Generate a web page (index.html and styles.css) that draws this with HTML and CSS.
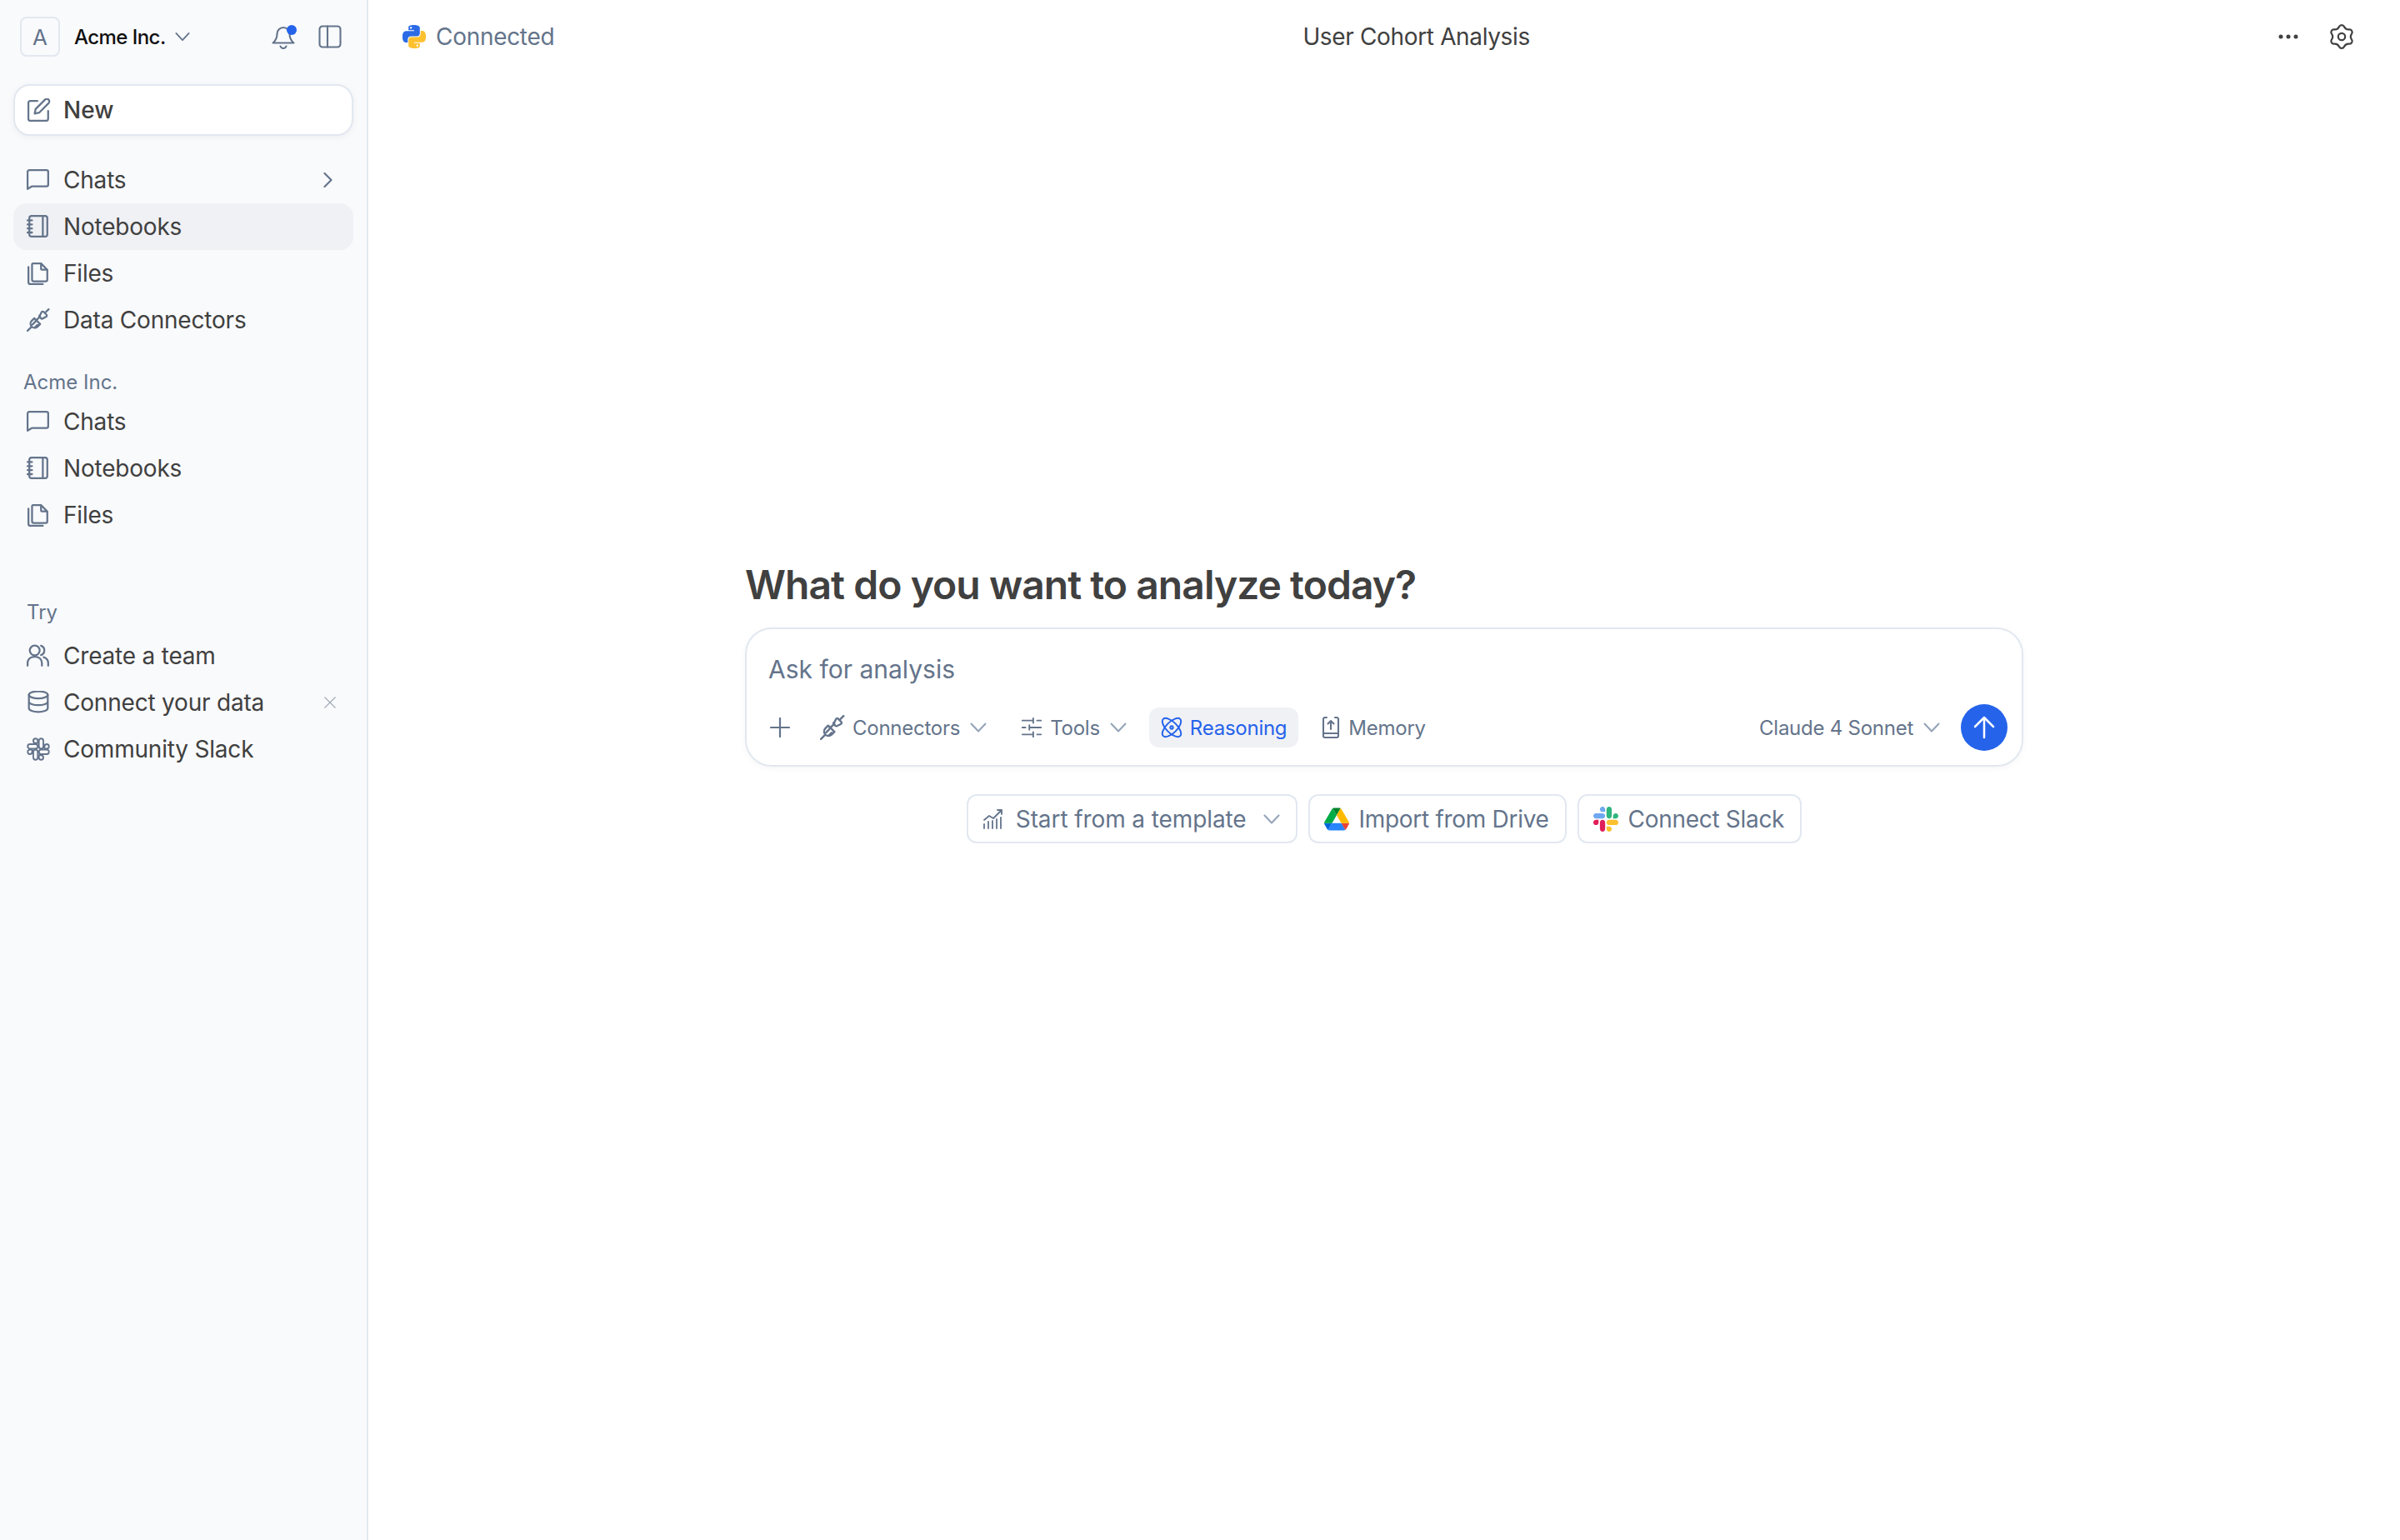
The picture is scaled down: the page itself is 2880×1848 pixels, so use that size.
FILE: index.html
```html
<!DOCTYPE html>
<html lang="en">
<head>
    <meta charset="UTF-8">
    <meta name="viewport" content="width=device-width, initial-scale=1.0">
    <title>User Cohort Analysis</title>
    <link rel="stylesheet" href="styles.css">
</head>
<body>
    <svg class="sprites" aria-hidden="true">
        <symbol id="i-chat" viewBox="2 2 26 26"><path d="M3 25V6a2 2 0 0 1 2-2h19a2 2 0 0 1 2 2v14a2 2 0 0 1-2 2H8z"/></symbol>
        <symbol id="i-notebook" viewBox="2 2 26 26"><rect x="5" y="3" width="20" height="23" rx="2.500"/><path d="M20 3v23M3 8h5M3 12.500h5M3 17h5M3 21.500h5"/></symbol>
        <symbol id="i-files" viewBox="2 2 26 26"><path d="M9 4h9l7 7v11a2 2 0 0 1-2 2H10a2 2 0 0 1-2-2V5a1 1 0 0 1 1-1zM18 4v6a1 1 0 0 0 1 1h6M4 8v17a2 2 0 0 0 2 2h14"/></symbol>
        <symbol id="i-plug" viewBox="2 2 26 26"><path d="M3 27l4-4M10.500 13l6.500 6.500-3 3a4.600 4.600 0 0 1-6.500-6.500zM8.500 20l3-3M11 23.500l3-3M26.500 3l-3 3M16.500 10.500l2-4a1.500 1.500 0 0 1 2.500-.5l3 3a1.500 1.500 0 0 1-.5 2.500l-4 2a1.500 1.500 0 0 1-1.500-.3l-1.500-1.500a1.500 1.500 0 0 1-.4-1.700zM12 16l5-5"/></symbol>
        <symbol id="i-users" viewBox="2 2 26 26"><circle cx="11" cy="9" r="5.500"/><path d="M3 26v-3a7 7 0 0 1 7-7h2a7 7 0 0 1 7 7v3M18 3.800a5.500 5.500 0 0 1 0 10.400M21 16.500a7 7 0 0 1 5 6.500v3"/></symbol>
        <symbol id="i-database" viewBox="2 2 26 26"><ellipse cx="15" cy="6.500" rx="10.500" ry="4"/><path d="M4.500 6.500v15c0 2.200 4.700 4 10.500 4s10.500-1.800 10.500-4v-15M4.500 14c0 2.200 4.700 4 10.500 4s10.500-1.800 10.500-4"/></symbol>
        <symbol id="i-slack" viewBox="-6 -6 134.800 134.800"><path d="M25.800 77.600c0 7.100-5.800 12.900-12.900 12.900S0 84.700 0 77.600s5.800-12.900 12.900-12.900h12.900v12.900zm6.500 0c0-7.100 5.800-12.900 12.900-12.900s12.900 5.800 12.900 12.900v32.300c0 7.100-5.800 12.900-12.900 12.900s-12.900-5.800-12.900-12.900V77.600z"/><path d="M45.200 25.800c-7.100 0-12.900-5.800-12.900-12.900S38.100 0 45.200 0s12.900 5.800 12.900 12.900v12.900H45.200zm0 6.500c7.100 0 12.900 5.800 12.900 12.900s-5.800 12.900-12.900 12.900H12.900C5.800 58.100 0 52.300 0 45.200s5.800-12.900 12.900-12.900h32.300z"/><path d="M97 45.200c0-7.100 5.800-12.900 12.900-12.900s12.900 5.800 12.900 12.900-5.800 12.900-12.900 12.900H97V45.200zm-6.500 0c0 7.100-5.800 12.900-12.900 12.900s-12.900-5.800-12.900-12.900V12.900C64.700 5.800 70.500 0 77.600 0s12.900 5.800 12.900 12.900v32.300z"/><path d="M77.600 97c7.100 0 12.900 5.800 12.900 12.900s-5.800 12.900-12.900 12.900-12.900-5.800-12.900-12.900V97h12.900zm0-6.500c-7.100 0-12.900-5.800-12.900-12.900s5.800-12.900 12.900-12.900h32.300c7.100 0 12.900 5.800 12.900 12.900s-5.800 12.900-12.900 12.900H77.600z"/></symbol>
        <symbol id="i-chevron" viewBox="0 0 20 20"><path d="M1.500 5.500l8.500 9 8.500-9"/></symbol>
    </svg>

    <div class="app">
        <aside class="sidebar">
            <div class="org-row">
                <span class="org-logo">A</span>
                <span class="org-name">Acme Inc.</span>
                <svg class="chev chev-org"><use href="#i-chevron"/></svg>
                <span class="org-actions">
                    <span class="bell">
                        <svg class="icon" viewBox="0 0 28 30"><path d="M6.500 11.500a7.500 7.500 0 0 1 15 0c0 6 2 8.500 5 11H1.500c3-2.500 5-5 5-11zM10.500 26.500a3.700 3.700 0 0 0 7 0"/></svg>
                        <span class="bell-dot"></span>
                    </span>
                    <svg class="icon" viewBox="0 0 28 28"><rect x="1.500" y="1.500" width="25" height="25" rx="3.500"/><path d="M11 1.500v25"/></svg>
                </span>
            </div>

            <button class="new-btn">
                <svg class="icon" viewBox="2 2 26 26"><path d="M13 5H5a2 2 0 0 0-2 2v18a2 2 0 0 0 2 2h18a2 2 0 0 0 2-2v-9"/><path d="M21.500 3.500a2.800 2.800 0 0 1 4 4L15 18l-5 1 1-5z"/></svg>
                New
            </button>

            <ul class="nav nav-first">
                <li><svg class="icon"><use href="#i-chat"/></svg>Chats<svg class="row-end chev-right" viewBox="0 0 20 20"><path d="M5.500 2l8 8-8 8"/></svg></li>
                <li class="active"><svg class="icon"><use href="#i-notebook"/></svg>Notebooks</li>
                <li><svg class="icon"><use href="#i-files"/></svg>Files</li>
                <li><svg class="icon"><use href="#i-plug"/></svg>Data Connectors</li>
            </ul>

            <p class="nav-label">Acme Inc.</p>
            <ul class="nav">
                <li><svg class="icon"><use href="#i-chat"/></svg>Chats</li>
                <li><svg class="icon"><use href="#i-notebook"/></svg>Notebooks</li>
                <li><svg class="icon"><use href="#i-files"/></svg>Files</li>
            </ul>

            <p class="nav-label nav-label-try">Try</p>
            <ul class="nav">
                <li><svg class="icon"><use href="#i-users"/></svg>Create a team</li>
                <li><svg class="icon"><use href="#i-database"/></svg>Connect your data<svg class="row-end close" viewBox="0 0 16 16"><path d="M1 1l14 14M15 1L1 15"/></svg></li>
                <li><svg class="icon icon-thin"><use href="#i-slack"/></svg>Community Slack</li>
            </ul>
        </aside>

        <main class="main">
            <header class="topbar">
                <div class="status">
                    <svg class="python" viewBox="0 0 24 24">
                        <path fill="#2b6be6" d="M14.250.180l.9.200.730.260.590.300.450.320.340.340.250.340.160.330.100.300.040.260.020.200-.010.130V8.500l-.05.630-.13.550-.21.460-.26.380-.3.310-.33.250-.35.190-.35.140-.33.100-.3.070-.26.040-.21.020H8.770l-.69.050-.59.140-.5.220-.41.270-.33.320-.27.350-.2.360-.15.370-.1.350-.07.320-.04.270-.02.210v3.060H3.170l-.21-.03-.28-.07-.32-.12-.35-.18-.36-.26-.36-.36-.35-.46-.32-.59-.28-.73-.21-.88-.14-1.050-.05-1.230.060-1.220.160-1.040.240-.87.320-.71.360-.57.400-.44.420-.33.420-.24.400-.16.360-.1.320-.05.240-.01h.160l.060.010h8.160v-.83H6.180l-.01-2.750-.02-.37.050-.34.110-.31.170-.28.250-.26.310-.23.380-.2.440-.18.510-.15.580-.12.640-.1.710-.06.770-.04.840-.02 1.270.050zm-6.300 1.980l-.23.330-.08.410.080.410.230.340.330.220.410.090.410-.09.330-.22.230-.34.080-.41-.08-.41-.23-.33-.33-.22-.41-.09-.41.090z"/>
                        <path fill="#fdc02f" d="M21.040 6.110l.280.060.320.120.350.180.360.270.360.350.350.470.320.590.280.730.210.880.140 1.040.050 1.230-.06 1.230-.16 1.040-.24.860-.32.710-.36.570-.4.450-.42.330-.42.240-.4.160-.36.090-.32.050-.24.020-.16-.01h-8.220v.82h5.840l.01 2.760.02.360-.05.34-.11.310-.17.290-.25.250-.31.240-.38.200-.44.170-.51.150-.58.130-.64.090-.71.070-.77.040-.84.010-1.270-.04-1.070-.14-.9-.2-.73-.25-.59-.3-.45-.33-.34-.34-.25-.34-.16-.33-.1-.3-.04-.25-.02-.2.010-.13v-5.340l.050-.64.130-.54.210-.46.260-.38.300-.32.330-.24.350-.2.350-.14.330-.1.300-.06.260-.04.210-.02.130-.01h5.840l.690-.05.590-.14.500-.21.410-.28.330-.32.270-.35.200-.36.150-.36.100-.35.070-.32.040-.28.020-.21V6.070h2.090l.140.010zm-6.470 14.250l-.23.330-.08.410.080.410.230.330.330.230.410.080.410-.08.330-.23.230-.33.080-.41-.08-.41-.23-.33-.33-.23-.41-.08-.41.080z"/>
                    </svg>
                    Connected
                </div>
                <div class="doc-title">User Cohort Analysis</div>
                <div class="top-actions">
                    <svg class="dots" viewBox="0 0 24 6"><circle cx="3" cy="3" r="2.500"/><circle cx="12" cy="3" r="2.500"/><circle cx="21" cy="3" r="2.500"/></svg>
                    <svg class="gear" viewBox="-2 -2 32 32"><path d="M11 2A3.300 3.300 0 0 1 17 2Q18.750 5.800 23 5.300A3.300 3.300 0 0 1 26 10.550Q23.500 14 26 17.450A3.300 3.300 0 0 1 23 22.700Q18.750 22.200 17 26A3.300 3.300 0 0 1 11 26Q9.250 22.200 5 22.700A3.300 3.300 0 0 1 2 17.450Q4.500 14 2 10.550A3.300 3.300 0 0 1 5 5.300Q9.250 5.800 11 2z"/><circle cx="14" cy="14" r="4.200"/></svg>
                </div>
            </header>

            <section class="composer-wrap">
                <h1>What do you want to analyze today?</h1>
                <div class="composer">
                    <div class="placeholder">Ask for analysis</div>
                    <div class="toolbar">
                        <button class="tool tool-plus"><svg class="plus" viewBox="0 0 24 24"><path d="M12 1v22M1 12h22"/></svg></button>
                        <button class="tool"><svg class="icon icon-plug"><use href="#i-plug"/></svg>Connectors<svg class="chev"><use href="#i-chevron"/></svg></button>
                        <button class="tool"><svg class="icon icon-tool" viewBox="0 0 28 28"><path d="M2 5h14M21 5h5M16 2v6M2 14h4M11 14h15M11 11v6M2 23h14M21 23h5M16 20v6"/></svg>Tools<svg class="chev"><use href="#i-chevron"/></svg></button>
                        <button class="tool tool-on"><svg class="icon icon-tool" viewBox="0 0 28 28"><circle cx="14" cy="14" r="1.800"/><ellipse cx="14" cy="14" rx="15.500" ry="7" transform="rotate(45 14 14)"/><ellipse cx="14" cy="14" rx="15.500" ry="7" transform="rotate(-45 14 14)"/></svg>Reasoning</button>
                        <button class="tool"><svg class="icon icon-memory" viewBox="0 0 24 28"><path d="M7 2H5a2 2 0 0 0-2 2v20a2 2 0 0 0 2 2h14a2 2 0 0 0 2-2V4a2 2 0 0 0-2-2h-2M3 21h18M12 16V6M8.500 9.500L12 6l3.500 3.500"/></svg>Memory</button>
                        <button class="tool tool-model">Claude 4 Sonnet<svg class="chev"><use href="#i-chevron"/></svg></button>
                        <button class="send"><svg viewBox="0 0 28 28"><path d="M14 26V2M3 13L14 2l11 11"/></svg></button>
                    </div>
                </div>

                <div class="chips">
                    <button class="chip chip-template">
                        <svg class="chip-icon chart" viewBox="0 0 26 26"><path d="M2 24v-5M7 24v-8M12 24v-9M17 24V13M22 24V11M2 14l6-5 5 3 10-10M18 2h5v5"/></svg>
                        Start from a template
                        <svg class="chev chev-chip"><use href="#i-chevron"/></svg>
                    </button>
                    <button class="chip">
                        <svg class="chip-icon" viewBox="0 0 87.300 78">
                            <path fill="#0066da" d="m6.600 66.850 3.850 6.650c.8 1.400 1.950 2.500 3.300 3.300l13.750-23.800h-27.500c0 1.550.4 3.100 1.200 4.500z"/>
                            <path fill="#00ac47" d="m43.650 25-13.750-23.800c-1.350.8-2.500 1.900-3.300 3.300l-25.400 44a9.060 9.060 0 0 0 -1.200 4.500h27.500z"/>
                            <path fill="#ea4335" d="m73.550 76.800c1.350-.8 2.500-1.900 3.300-3.300l1.600-2.750 7.650-13.250c.8-1.400 1.200-2.950 1.200-4.500h-27.502l5.852 11.500z"/>
                            <path fill="#00832d" d="m43.650 25 13.750-23.800c-1.350-.8-2.900-1.200-4.500-1.200h-18.500c-1.600 0-3.150.45-4.500 1.200z"/>
                            <path fill="#2684fc" d="m59.800 53h-32.300l-13.750 23.800c1.350.8 2.900 1.200 4.500 1.200h50.800c1.600 0 3.150-.45 4.500-1.200z"/>
                            <path fill="#ffba00" d="m73.400 26.500-12.700-22c-.8-1.400-1.950-2.500-3.300-3.300l-13.750 23.800 16.150 28h27.450c0-1.550-.4-3.100-1.200-4.500z"/>
                        </svg>
                        Import from Drive
                    </button>
                    <button class="chip">
                        <svg class="chip-icon" viewBox="0 0 122.800 122.800">
                            <path fill="#e01e5a" d="M25.800 77.600c0 7.100-5.800 12.900-12.900 12.900S0 84.700 0 77.600s5.800-12.900 12.900-12.900h12.900v12.900zm6.500 0c0-7.100 5.800-12.900 12.900-12.900s12.900 5.800 12.900 12.900v32.300c0 7.100-5.800 12.900-12.900 12.900s-12.900-5.800-12.900-12.900V77.600z"/>
                            <path fill="#6fa8f0" d="M45.200 25.800c-7.100 0-12.900-5.800-12.900-12.900S38.100 0 45.200 0s12.900 5.800 12.900 12.900v12.900H45.200zm0 6.500c7.100 0 12.900 5.800 12.900 12.900s-5.800 12.900-12.900 12.900H12.900C5.800 58.100 0 52.300 0 45.200s5.800-12.900 12.900-12.900h32.300z"/>
                            <path fill="#2eb67d" d="M97 45.200c0-7.100 5.800-12.900 12.900-12.900s12.900 5.800 12.900 12.900-5.800 12.900-12.900 12.900H97V45.200zm-6.500 0c0 7.100-5.800 12.900-12.900 12.900s-12.900-5.800-12.900-12.900V12.900C64.700 5.800 70.500 0 77.600 0s12.900 5.800 12.900 12.900v32.300z"/>
                            <path fill="#fdc02f" d="M77.600 97c7.100 0 12.900 5.800 12.900 12.900s-5.800 12.900-12.900 12.900-12.900-5.800-12.900-12.900V97h12.900zm0-6.500c-7.100 0-12.900-5.800-12.900-12.900s5.800-12.900 12.900-12.900h32.300c7.100 0 12.900 5.800 12.900 12.900s-5.800 12.900-12.900 12.900H77.600z"/>
                        </svg>
                        Connect Slack
                    </button>
                </div>
            </section>
        </main>
    </div>
</body>
</html>
```

FILE: styles.css
```css
* {
    box-sizing: border-box;
}
body {
    margin: 0;
    font-family: Inter, "Noto Sans", sans-serif;
    background: #fff;
    color: #404040;
}
button {
    font: inherit;
    letter-spacing: inherit;
    border: none;
    background: none;
    cursor: pointer;
}
.sprites {
    display: none;
}
.app {
    display: flex;
    min-height: 1848px;
}

/* sidebar */
.sidebar {
    width: 442px;
    flex-shrink: 0;
    background: #f9fafc;
    border-right: 2px solid #e2e8f0;
    padding: 0 16px;
}
.icon {
    width: 28px;
    height: 28px;
    flex-shrink: 0;
    fill: none;
    stroke: #64748b;
    stroke-width: 2.100;
    stroke-linecap: round;
    stroke-linejoin: round;
}
.icon-thin {
    stroke-width: 9;
}
.chev {
    width: 20px;
    height: 20px;
    flex-shrink: 0;
    fill: none;
    stroke: #94a3b8;
    stroke-width: 2;
    stroke-linecap: round;
    stroke-linejoin: round;
}
.org-row {
    display: flex;
    align-items: center;
    height: 88px;
    padding-left: 8px;
}
.org-logo {
    width: 48px;
    height: 48px;
    display: flex;
    align-items: center;
    justify-content: center;
    border: 2px solid #e2e8f0;
    border-radius: 8px;
    color: #64748b;
    font-size: 26px;
}
.org-name {
    margin-left: 17px;
    font-size: 24px;
    font-weight: 500;
    letter-spacing: -0.55px;
    color: #0f0f0f;
}
.chev-org {
    margin-left: 11px;
    width: 18px;
    height: 18px;
    stroke: #64748b;
}
.org-actions {
    margin-left: auto;
    margin-right: 14px;
    display: flex;
    align-items: center;
    gap: 28px;
}
.bell {
    position: relative;
    display: flex;
}
.bell .icon {
    height: 30px;
}
.bell-dot {
    position: absolute;
    top: 1px;
    right: -2px;
    width: 12px;
    height: 12px;
    border-radius: 50%;
    background: #2563eb;
}
.new-btn {
    width: 408px;
    height: 62px;
    margin-top: 13px;
    display: flex;
    align-items: center;
    gap: 15px;
    padding: 0 15px;
    background: #fff;
    border: 2px solid #e2e8f0;
    border-radius: 20px;
    box-shadow: 0 2px 8px rgba(15, 23, 42, 0.05);
    font-size: 28px;
    font-weight: 500;
    color: #404040;
}
.nav {
    list-style: none;
    margin: 0;
    padding: 0;
}
.nav-first {
    margin-top: 25px;
}
.nav li {
    display: flex;
    align-items: center;
    gap: 16px;
    height: 56px;
    padding: 0 16px;
    border-radius: 16px;
    font-size: 28px;
    letter-spacing: -0.2px;
}
.nav li.active {
    background: #f0f1f5;
}
.row-end {
    margin-left: auto;
    fill: none;
    stroke-linecap: round;
    stroke-linejoin: round;
}
.chev-right {
    width: 20px;
    height: 20px;
    margin-right: 4px;
    stroke: #64748b;
    stroke-width: 2.200;
}
.close {
    width: 14px;
    height: 14px;
    margin-right: 5px;
    stroke: #9aa3af;
    stroke-width: 1.500;
}
.nav-label {
    margin: 32px 0 4px;
    padding-left: 12px;
    height: 30px;
    line-height: 30px;
    font-size: 24px;
    color: #64748b;
}
.nav-label-try {
    margin: 74px 0 9px;
    padding-left: 16px;
}

/* main */
.main {
    flex: 1;
    min-width: 0;
}
.topbar {
    height: 88px;
    display: flex;
    align-items: center;
    justify-content: space-between;
    padding: 0 54px 0 41px;
}
.status {
    display: flex;
    align-items: center;
    gap: 12px;
    font-size: 28px;
    letter-spacing: -0.3px;
    color: #64748b;
}
.python {
    width: 28px;
    height: 28px;
}
.doc-title {
    font-size: 28px;
    letter-spacing: -0.35px;
}
.top-actions {
    display: flex;
    align-items: center;
    gap: 36px;
}
.dots {
    width: 24px;
    height: 6px;
    fill: #404040;
}
.gear {
    width: 32px;
    height: 32px;
    fill: none;
    stroke: #404040;
    stroke-width: 2.200;
    stroke-linejoin: round;
}
.composer-wrap {
    width: 1534px;
    margin: 0 auto;
    padding-top: 585px;
}
h1 {
    margin: 0 0 22px;
    font-size: 48px;
    line-height: 58px;
    font-weight: 600;
    letter-spacing: -0.95px;
    color: #404040;
}
.composer {
    height: 167px;
    padding: 28px 17px 17px 26px;
    border: 2px solid #e2e8f0;
    border-radius: 32px;
    box-shadow: 0 2px 8px rgba(15, 23, 42, 0.04);
}
.placeholder {
    font-size: 30px;
    line-height: 40px;
    color: #64748b;
}
.toolbar {
    display: flex;
    align-items: center;
    gap: 13px;
    margin-top: 22px;
    height: 56px;
}
.tool {
    display: flex;
    align-items: center;
    gap: 9px;
    height: 48px;
    padding: 0 14px;
    border-radius: 12px;
    font-size: 24px;
    letter-spacing: -0.25px;
    color: #64748b;
}
.tool .chev {
    margin-left: 3px;
}
.tool-plus {
    padding: 0;
    width: 28px;
    justify-content: center;
    margin-right: 7px;
}
.plus {
    width: 24px;
    height: 24px;
    fill: none;
    stroke: #64748b;
    stroke-width: 2.200;
    stroke-linecap: round;
}
.icon-plug {
    width: 30px;
    height: 30px;
}
.icon-tool {
    width: 26px;
    height: 26px;
}
.icon-memory {
    width: 24px;
    height: 28px;
}
.tool-on {
    background: #f0f1f5;
    color: #2563eb;
}
.tool-on .icon {
    stroke: #2563eb;
}
.tool-model {
    margin-left: auto;
    margin-right: 12px;
    padding: 0;
}
.send {
    width: 56px;
    height: 56px;
    flex-shrink: 0;
    display: flex;
    align-items: center;
    justify-content: center;
    padding: 0;
    border-radius: 50%;
    background: #2563eb;
}
.send svg {
    width: 28px;
    height: 28px;
    fill: none;
    stroke: #fff;
    stroke-width: 2.500;
    stroke-linecap: round;
    stroke-linejoin: round;
}
.chips {
    display: flex;
    justify-content: center;
    gap: 13px;
    margin-top: 33px;
}
.chip {
    display: flex;
    align-items: center;
    gap: 12px;
    height: 59px;
    padding: 0 19px 0 17px;
    background: #fff;
    border: 2px solid #e2e8f0;
    border-radius: 12px;
    font-size: 28px;
    letter-spacing: -0.3px;
    color: #64748b;
}
.chip-template {
    letter-spacing: -0.1px;
}
.chip-icon {
    width: 30px;
    height: 30px;
    flex-shrink: 0;
}
.chart {
    width: 26px;
    height: 26px;
    margin-right: 2px;
    fill: none;
    stroke: #64748b;
    stroke-width: 1.800;
    stroke-linecap: round;
    stroke-linejoin: round;
}
.chev-chip {
    margin-left: 8px;
}
```
